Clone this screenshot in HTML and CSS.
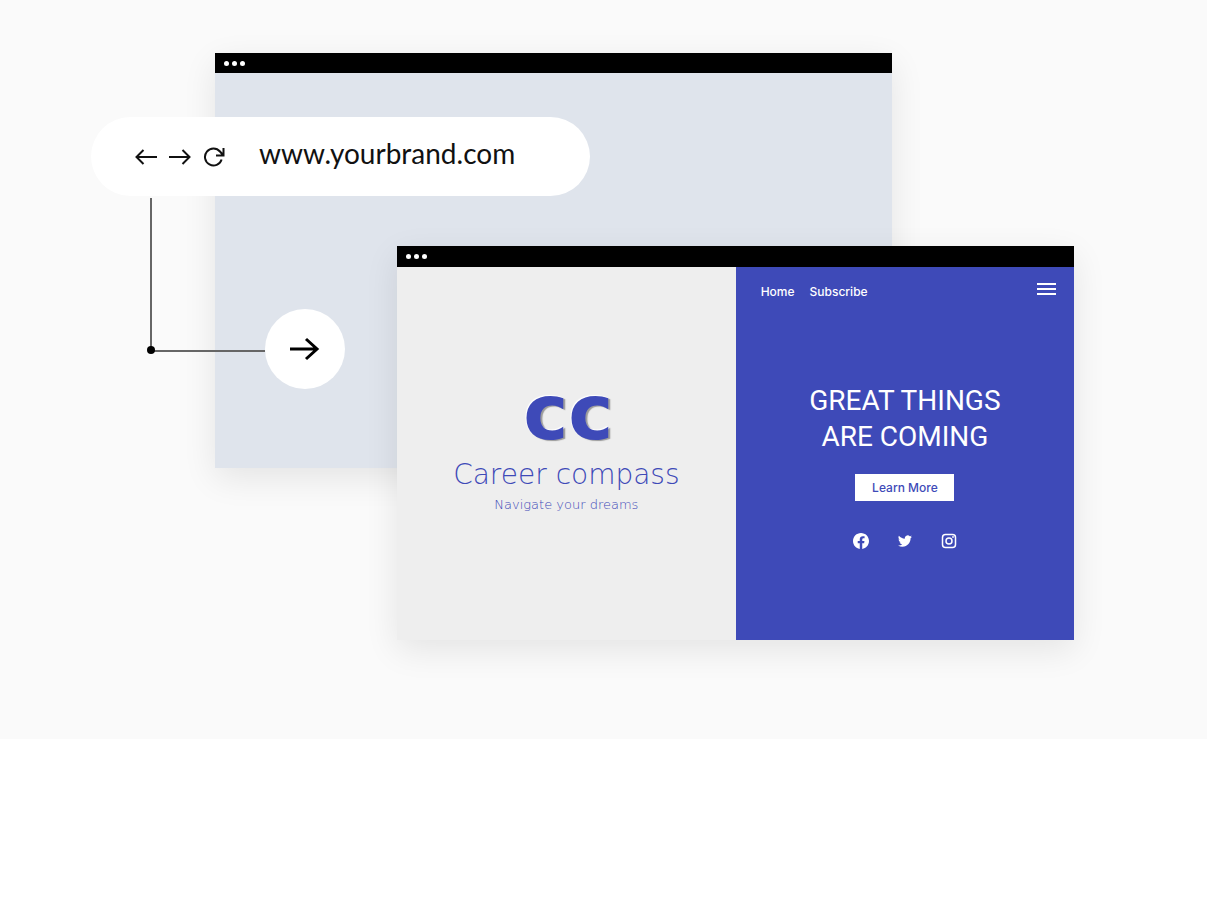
FILE: index.html
```html
<!DOCTYPE html>
<html lang="en">
<head>
<meta charset="utf-8">
<meta name="viewport" content="width=device-width, initial-scale=1">
<title>Career compass</title>
<link rel="stylesheet" href="styles.css">
</head>
<body>
<main class="hero">
  <div class="scene">
    <div class="window window-back">
      <div class="bar"><i></i><i></i><i></i></div>
    </div>

    <div class="address">
      <div class="nav">
        <button type="button" aria-label="Back"><svg width="22" height="16" viewBox="0 0 22 16"><path d="M22 8H2M8.500 1L1.500 8l7 7"/></svg></button>
        <button type="button" aria-label="Forward"><svg width="22" height="16" viewBox="0 0 22 16"><path d="M0 8h20M13.500 1l7 7-7 7"/></svg></button>
        <button type="button" aria-label="Reload"><svg width="22" height="20" viewBox="0 0 22 20"><path d="M18.600 12.500A8.500 8.500 0 1 1 17 4.500L20 8M20.500 1v7.500h-7.500"/></svg></button>
      </div>
      <span class="url">www.yourbrand.com</span>
    </div>

    <div class="link">
      <div class="elbow"></div>
      <button type="button" class="go" aria-label="Go"><svg width="30" height="24" viewBox="0 0 30 24"><path d="M0 12h27M16 2l11 10-11 10"/></svg></button>
    </div>

    <div class="window window-front">
      <div class="bar"><i></i><i></i><i></i></div>
      <div class="split">
        <section class="brand">
          <div class="mark">cc</div>
          <div class="name">Career compass</div>
          <div class="tagline">Navigate your dreams</div>
        </section>
        <section class="promo">
          <nav class="menu">
            <a href="#">Home</a>
            <a href="#">Subscribe</a>
            <button type="button" aria-label="Menu"><svg width="20" height="14" viewBox="0 0 20 14"><path d="M0 2h19M0 7h19M0 12h19"/></svg></button>
          </nav>
          <h1>GREAT THINGS<br>ARE COMING</h1>
          <button type="button" class="more">Learn More</button>
          <div class="social">
            <a href="#" aria-label="Facebook"><svg width="16" height="16" viewBox="0 0 24 24"><path d="M24 12.070C24 5.400 18.630 0 12 0S0 5.400 0 12.070c0 6.030 4.390 11.020 10.130 11.930v-8.440H7.080v-3.490h3.050V9.410c0-3.020 1.790-4.690 4.530-4.690 1.310 0 2.690.24 2.690.24v2.970h-1.520c-1.490 0-1.960.93-1.960 1.890v2.250h3.330l-.53 3.490h-2.800V24C19.610 23.090 24 18.100 24 12.070z"/></svg></a>
            <a href="#" aria-label="Twitter"><svg width="14" height="14" viewBox="0 0 24 24"><path d="M23.950 4.570a10 10 0 0 1-2.820.77 4.960 4.960 0 0 0 2.160-2.720c-.95.55-2 .95-3.130 1.180a4.920 4.920 0 0 0-8.380 4.480C7.690 8.090 4.070 6.130 1.640 3.160a4.920 4.920 0 0 0 1.520 6.570 4.900 4.900 0 0 1-2.230-.61v.06a4.920 4.920 0 0 0 3.950 4.830 5 5 0 0 1-2.210.08 4.940 4.940 0 0 0 4.600 3.420A9.870 9.870 0 0 1 0 19.540a14 14 0 0 0 7.550 2.210c9.050 0 14-7.500 14-13.980 0-.21 0-.42-.02-.63a9.940 9.940 0 0 0 2.420-2.570z"/></svg></a>
            <a href="#" aria-label="Instagram"><svg class="outline" width="16" height="16" viewBox="0 0 16 16"><rect x="1.500" y="1.500" width="13" height="13" rx="3"/><circle cx="8" cy="8" r="3"/><circle cx="12" cy="4" r=".3"/></svg></a>
          </div>
        </section>
      </div>
    </div>
  </div>
</main>
</body>
</html>
```
FILE: styles.css
```css
* { box-sizing: border-box; }

body {
  margin: 0;
  background: #fff;
  font-family: Inter, "Open Sans", sans-serif;
}

button {
  display: flex;
  align-items: center;
  justify-content: center;
  padding: 0;
  border: 0;
  background: none;
  color: inherit;
  cursor: pointer;
}

svg {
  display: block;
  fill: none;
  stroke: currentColor;
  stroke-width: 2;
}

.hero {
  padding: 53px 11% 99px 91px;
  background: #fafafa;
}

/* Overlapping windows share the tracks of one grid. */
.scene {
  display: grid;
  grid-template-columns: 124fr 182fr 193fr 302fr 182fr;
  grid-template-rows: 64px 79px 50px 222px auto;
}

.window {
  display: flex;
  flex-direction: column;
  box-shadow: 0 10px 32px rgba(0, 0, 0, .09);
}

.window-back {
  grid-area: 1 / 2 / 5 / 5;
  background: #dfe4ec;
}

.window-front {
  grid-area: 4 / 3 / 6 / 6;
}

.bar {
  display: flex;
  align-items: center;
  gap: 3px;
  height: 20px;
  padding-left: 9px;
  background: #000;
}

.window-front .bar { height: 21px; }

.bar i {
  width: 5px;
  height: 5px;
  border-radius: 50%;
  background: #fff;
}

.address {
  grid-area: 2 / 1 / 3 / 4;
  display: flex;
  align-items: center;
  gap: 34px;
  padding-left: 44px;
  border-radius: 40px;
  background: #fff;
  color: #111;
}

.nav {
  display: flex;
  align-items: center;
  gap: 12px;
}

.url {
  padding-bottom: 8px;
  font-family: Lato, sans-serif;
  font-size: 28px;
  line-height: 32px;
}

.link {
  grid-area: 3 / 1 / 5 / 4;
  display: flex;
  align-self: start;
  align-items: flex-end;
  width: 254px;
  height: 193px;
  padding: 2px 0 0 59px;
}

.elbow {
  position: relative;
  flex: 1;
  align-self: stretch;
  margin-bottom: 37px;
  border: solid #666;
  border-width: 0 0 2px 2px;
}

.elbow::after {
  content: "";
  position: absolute;
  left: -5px;
  bottom: -4px;
  width: 8px;
  height: 8px;
  border-radius: 50%;
  background: #000;
}

.go {
  width: 80px;
  height: 80px;
  border-radius: 50%;
  background: #fff;
  color: #000;
}

.go svg { stroke-width: 3; }

.split {
  flex: 1;
  display: grid;
  grid-template-columns: 1fr 1fr;
}

.brand,
.promo {
  display: flex;
  flex-direction: column;
  align-items: center;
}

.brand {
  padding-top: 108px;
  background: #eee;
  color: #3e4ab8;
  font-family: "DejaVu Sans", sans-serif;
}

.mark {
  padding-left: 4px;
  font-size: 76px;
  font-weight: 700;
  line-height: 76px;
  text-shadow: -1px -1px 1px #fff, 2px 1px 1px #999;
}

.name {
  margin-top: 4px;
  font-size: 28px;
  font-weight: 200;
  line-height: 40px;
}

.tagline {
  font-size: 13px;
  font-weight: 200;
  line-height: 20px;
}

.promo {
  padding-bottom: 91px;
  background: #3e4ab8;
  color: #fff;
}

.promo a {
  color: inherit;
  text-decoration: none;
}

.menu {
  display: flex;
  align-self: stretch;
  gap: 15px;
  padding: 14px 17px 0 25px;
  font-size: 12px;
  font-weight: 500;
  line-height: 22px;
}

.menu button {
  height: 16px;
  margin-left: auto;
}

h1 {
  margin: 80px 0 19px;
  font-family: Roboto, sans-serif;
  font-size: 28px;
  font-weight: 400;
  line-height: 36px;
  text-align: center;
}

.more {
  width: 99px;
  height: 27px;
  background: #fff;
  color: #3e4ab8;
  font: 500 12px/16px Inter, sans-serif;
}

.social {
  display: flex;
  align-items: center;
  gap: 29px;
  margin-top: 32px;
}

.social svg {
  fill: currentColor;
  stroke: none;
}

.social .outline {
  fill: none;
  stroke: currentColor;
  stroke-width: 1.5;
}
```
